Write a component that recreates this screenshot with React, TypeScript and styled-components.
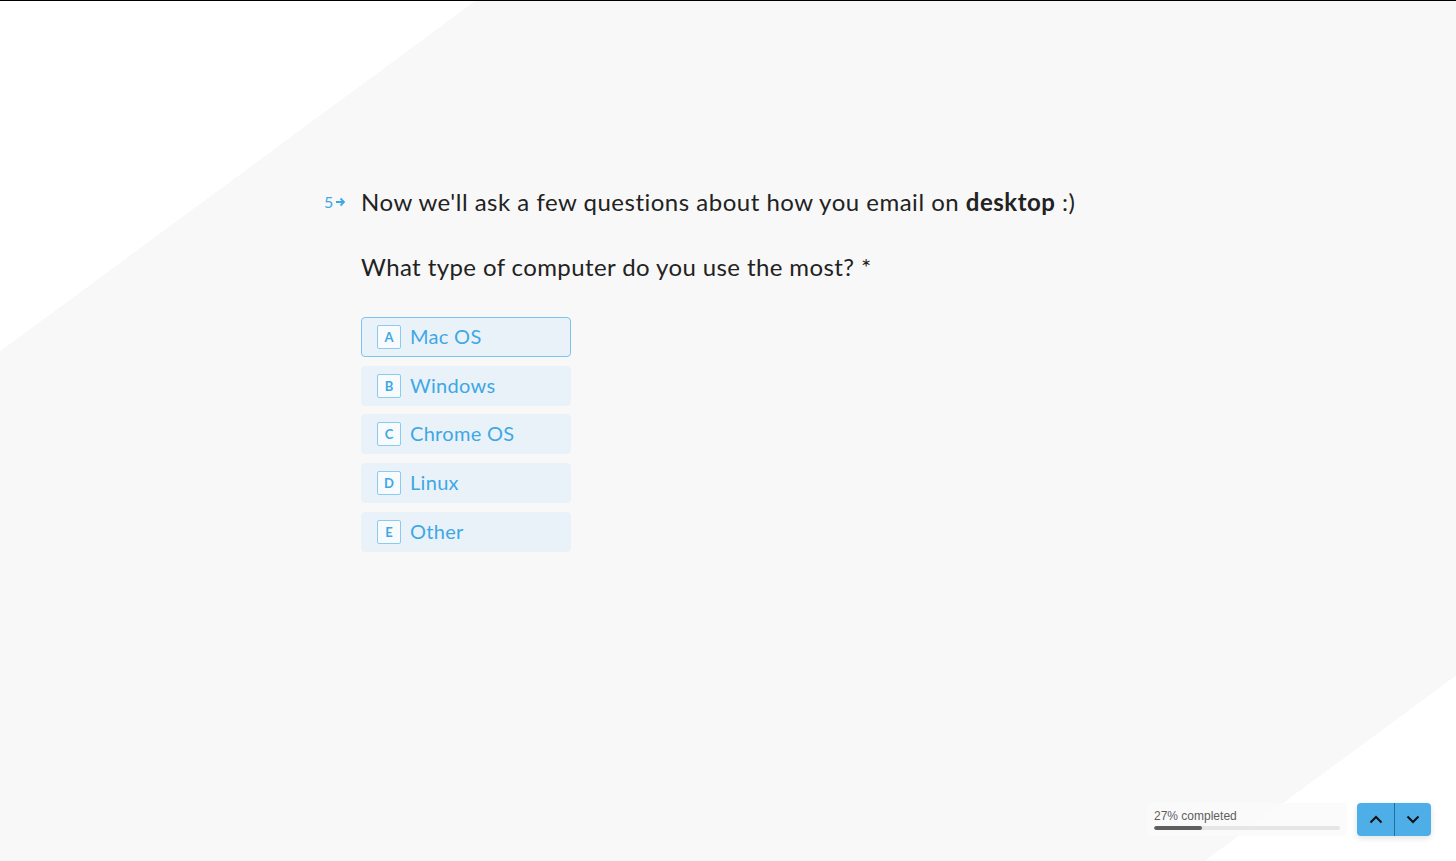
import styled, { createGlobalStyle } from 'styled-components';

const GlobalStyle = createGlobalStyle`
  html, body {
    margin: 0;
    padding: 0;
  }
  body {
    font-family: 'Lato', 'Noto Sans', sans-serif;
  }
`;

const Page = styled.div`
  position: relative;
  width: 100%;
  height: 861px;
  box-sizing: border-box;
  border-top: 1px solid #000;
  overflow: hidden;
  background: linear-gradient(
    143.6deg,
    #ffffff 0,
    #ffffff 282px,
    #f8f8f8 282px,
    #f8f8f8 1407px,
    #ffffff 1407px
  );
`;

const Content = styled.main`
  display: flex;
  flex-direction: column;
  padding: 185px 0 0 361px;
`;

const Heading = styled.div`
  position: relative;
  font-size: 24px;
  line-height: 32px;
  letter-spacing: 0.5px;
  color: #222;
  font-weight: 400;
`;

const Counter = styled.span`
  position: absolute;
  left: -37px;
  top: 0;
  display: flex;
  align-items: center;
  gap: 2px;
  font-size: 16px;
  letter-spacing: 0;
  color: #3ea8e5;
  line-height: 32px;
`;

const Question = styled.h2`
  margin: 33px 0 0;
  font-size: 24px;
  line-height: 32px;
  letter-spacing: 0.4px;
  font-weight: 400;
  color: #222;
`;

const Options = styled.div`
  display: flex;
  flex-direction: column;
  gap: 8.7px;
  margin-top: 34px;
  width: 210px;
`;

const Option = styled.div<{ $selected?: boolean }>`
  display: flex;
  align-items: center;
  gap: 9px;
  height: 40px;
  box-sizing: border-box;
  padding: 0 15px 2px;
  border-radius: 4px;
  background: #eaf2f9;
  border: 1px solid ${(p) => (p.$selected ? '#7cc4ee' : '#eaf2f9')};
  color: #3ea8e5;
  font-size: 20px;
  letter-spacing: 0.3px;
  cursor: pointer;
`;

const Key = styled.span`
  display: flex;
  align-items: center;
  justify-content: center;
  width: 24px;
  height: 24px;
  margin-top: 2px;
  box-sizing: border-box;
  border: 1px solid #8ccbf0;
  border-radius: 2px;
  background: #f7fbfe;
  font-size: 13px;
  font-weight: 700;
  letter-spacing: 0;
  color: #3ea8e5;
`;

const Footer = styled.div`
  position: absolute;
  right: 25px;
  bottom: 25px;
  display: flex;
  align-items: center;
  gap: 10px;
`;

const Progress = styled.div`
  width: 200px;
  height: 33px;
  box-sizing: border-box;
  padding: 6px 7px 0;
  background: rgba(250, 250, 250, 0.8);
  border-radius: 3px;
  font-family: 'Liberation Sans', Arial, sans-serif;
  font-size: 12px;
  color: #5e5e5e;
`;

const Track = styled.div`
  margin-top: 3px;
  height: 4px;
  border-radius: 2px;
  background: #e6e6e6;
  overflow: hidden;
`;

const Fill = styled.div`
  height: 100%;
  border-radius: 2px;
  background: #5f5f5f;
`;

const NavGroup = styled.div`
  display: flex;
  border-radius: 4px;
  overflow: hidden;
  box-shadow: 0 2px 6px rgba(0, 0, 0, 0.12);
`;

const NavButton = styled.button`
  width: 37px;
  height: 33px;
  padding: 0;
  border: none;
  background: #4daee8;
  display: flex;
  align-items: center;
  justify-content: center;
  cursor: pointer;
  & + & {
    border-left: 1px solid #1f6fa0;
  }
`;

const Chevron = ({ up }: { up?: boolean }) => (
  <svg width="14" height="9" viewBox="0 0 14 9" fill="none">
    <path
      d={up ? 'M1.5 7.5L7 2l5.5 5.5' : 'M1.5 1.5L7 7l5.5-5.5'}
      stroke="#111"
      strokeWidth="2"
    />
  </svg>
);

const options = ['Mac OS', 'Windows', 'Chrome OS', 'Linux', 'Other'];
const letters = ['A', 'B', 'C', 'D', 'E'];
const progress = 27;

export default function App() {
  return (
    <>
      <GlobalStyle />
      <Page>
        <Content>
          <Heading>
            <Counter>
              5
              <svg width="11" height="10" viewBox="0 0 11 10" fill="none">
                <path d="M1 5h8M5.5 1.5L9 5 5.5 8.5" stroke="#3ea8e5" strokeWidth="1.8" />
              </svg>
            </Counter>
            Now we'll ask a few questions about how you email on <b>desktop</b> :)
          </Heading>
          <Question>What type of computer do you use the most? *</Question>
          <Options>
            {options.map((o, i) => (
              <Option key={o} $selected={i === 0}>
                <Key>{letters[i]}</Key>
                {o}
              </Option>
            ))}
          </Options>
        </Content>
        <Footer>
          <Progress>
            {progress}% completed
            <Track>
              <Fill style={{ width: `${progress - 1}%` }} />
            </Track>
          </Progress>
          <NavGroup>
            <NavButton aria-label="Previous">
              <Chevron up />
            </NavButton>
            <NavButton aria-label="Next">
              <Chevron />
            </NavButton>
          </NavGroup>
        </Footer>
      </Page>
    </>
  );
}
